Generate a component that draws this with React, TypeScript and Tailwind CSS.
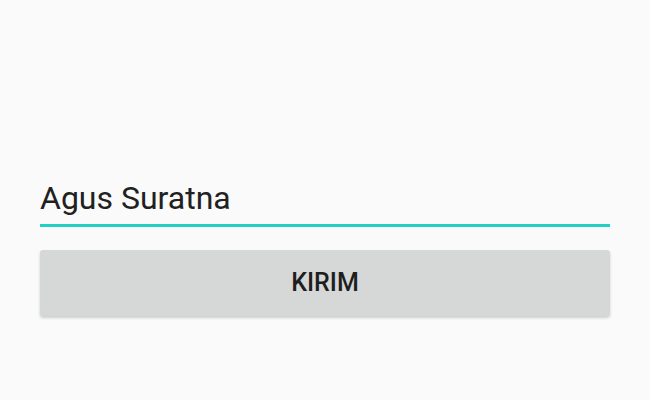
export default function App() {
  return (
    <div className="w-[650px] h-[400px] bg-[#fafafa] flex flex-col px-[40px] pt-[176px]" style={{ fontFamily: "Roboto, 'Noto Sans', sans-serif" }}>
      <div className="text-[32px] leading-[44px] text-[#212121]">Agus Suratna</div>
      <div className="h-[3px] bg-[#22d0c4] mt-[4px]"></div>
      <button className="mt-[23px] h-[66px] w-full bg-[#d6d7d7] rounded-[3px] shadow-[0_2px_3px_rgba(0,0,0,0.18)] text-[25px] font-medium text-[#1e1e1e] flex items-center justify-center">
        KIRIM
      </button>
    </div>
  );
}
